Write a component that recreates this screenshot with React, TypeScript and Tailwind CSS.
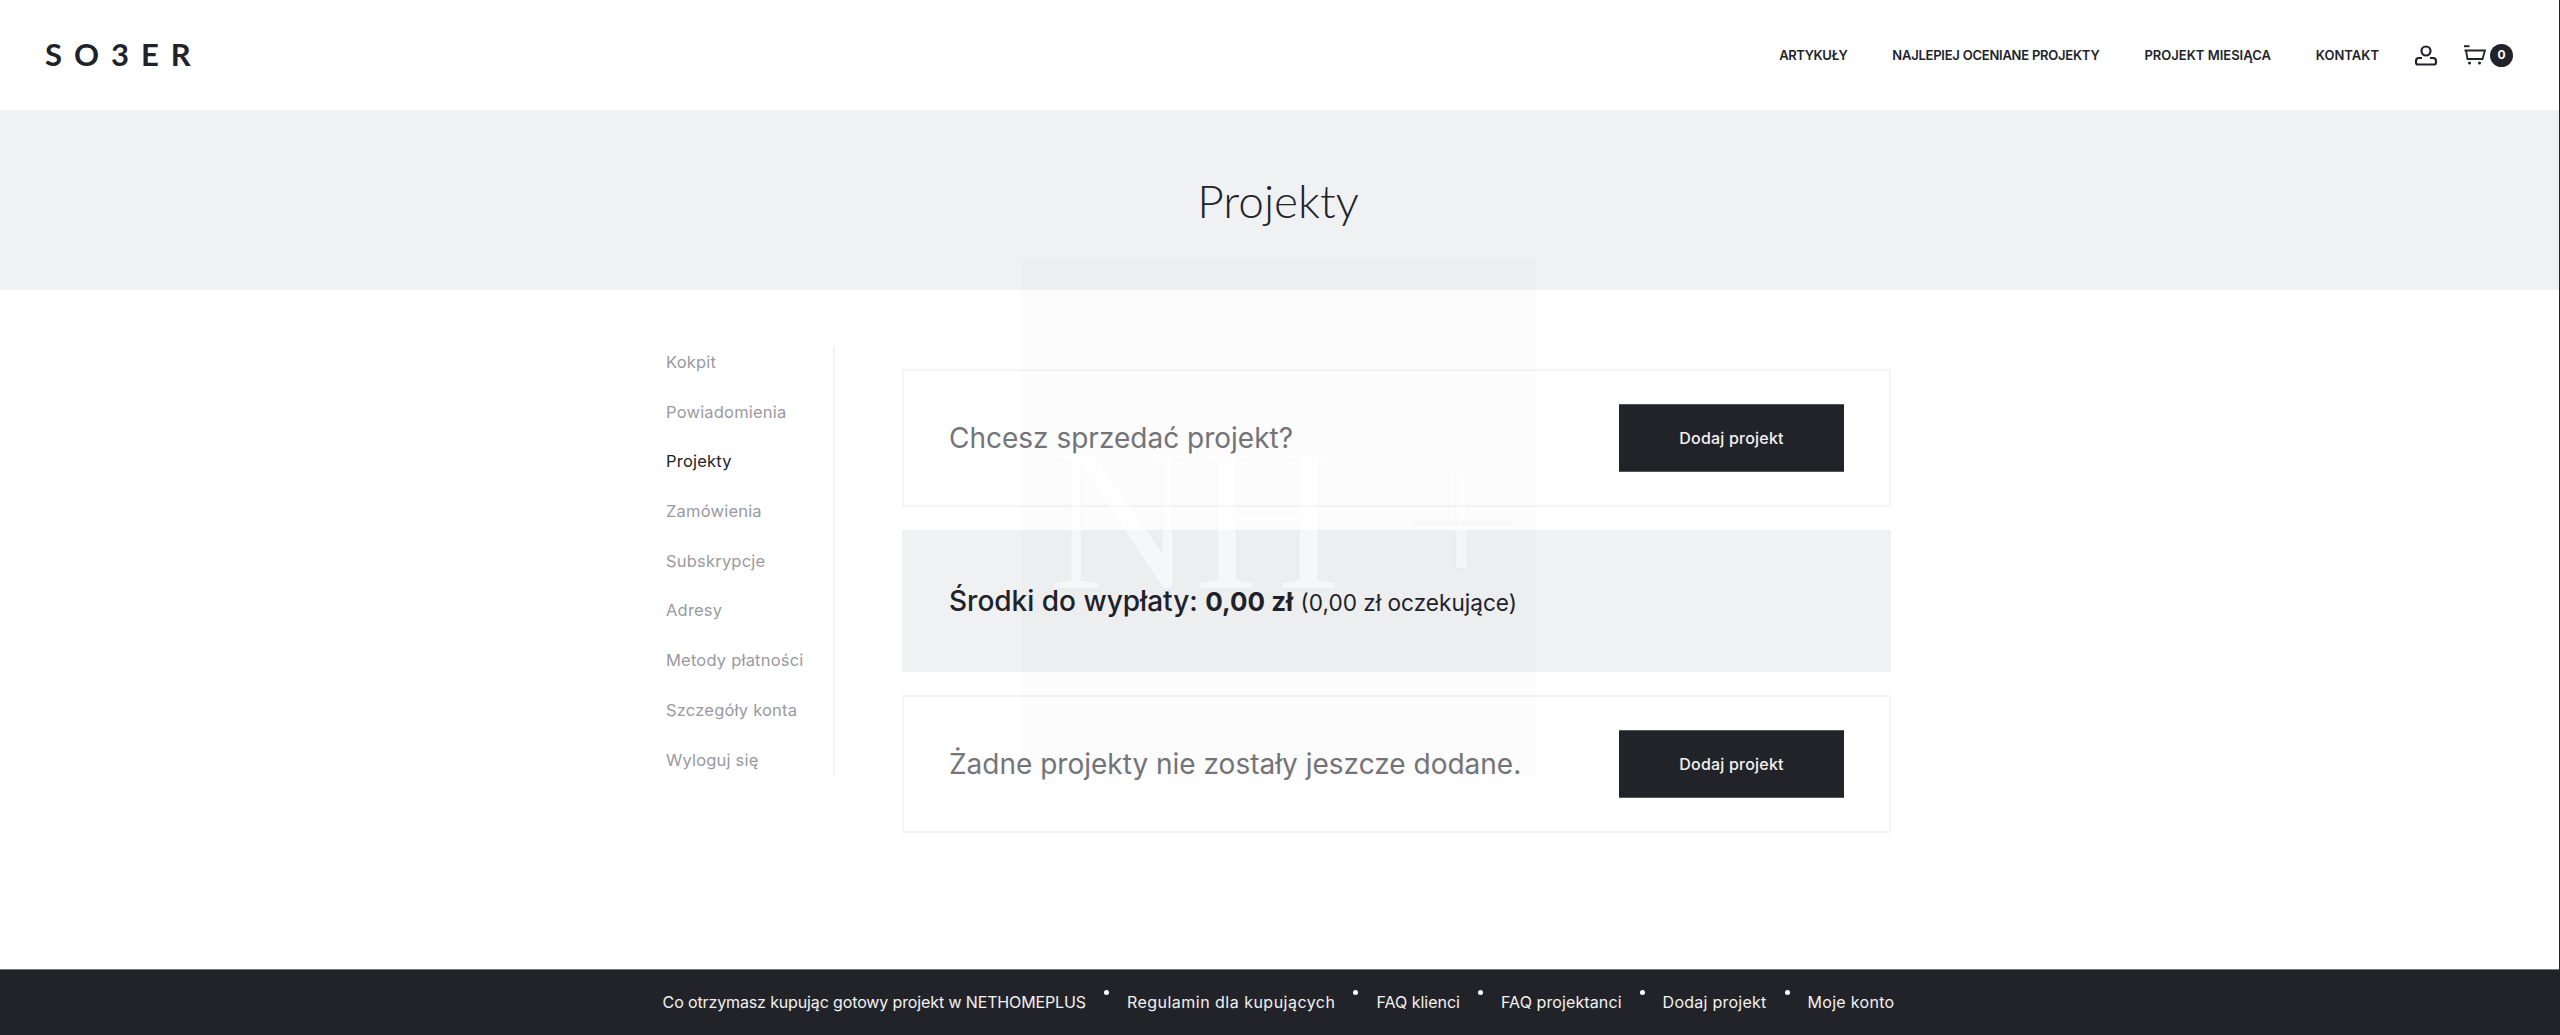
import React from "react";

const sideItems = ["Kokpit", "Powiadomienia", "Projekty", "Zamówienia", "Subskrypcje", "Adresy", "Metody płatności", "Szczegóły konta", "Wyloguj się"];
const footerItems = [
  { t: "Co otrzymasz kupując gotowy projekt w NETHOMEPLUS", c: "tracking-[-0.13px]" },
  { t: "Regulamin dla kupujących", c: "tracking-[0.48px]" },
  { t: "FAQ klienci", c: "" },
  { t: "FAQ projektanci", c: "tracking-[0.1px]" },
  { t: "Dodaj projekt", c: "tracking-[0.25px]" },
  { t: "Moje konto", c: "tracking-[0.3px]" },
];

function UserIcon() {
  return (
    <svg width="24" height="24" viewBox="0 0 24 24" fill="none" stroke="#22232a" strokeWidth="2.2">
      <circle cx="12" cy="8" r="4.5" />
      <path d="M8 15 H5 a3 3 0 0 0 -3 3 v1.5 a2 2 0 0 0 2 2 h16 a2 2 0 0 0 2 -2 V18 a3 3 0 0 0 -3 -3 h-3" />
    </svg>
  );
}

function CartIcon() {
  return (
    <svg width="24" height="24" viewBox="0 0 24 24" fill="none" stroke="#22232a" strokeWidth="1.8">
      <path d="M1 3.2 H6.5" strokeWidth="2" />
      <path d="M1.5 7.5 H22 L19.5 16 H4.5 L3 7.5" />
      <circle cx="6.5" cy="20" r="1.5" fill="#22232a" stroke="none" />
      <circle cx="16.5" cy="20" r="1.5" fill="#22232a" stroke="none" />
    </svg>
  );
}

function Watermark() {
  return (
    <svg className="absolute left-[1022px] top-[259px] pointer-events-none" width="514" height="518" viewBox="0 0 514 518">
      <rect x="0" y="0" width="514" height="518" fill="#000" fillOpacity="0.012" />
      <text x="26" y="329" fontFamily="Liberation Serif" fontSize="205" textLength="293" lengthAdjust="spacingAndGlyphs" fill="#fff" fillOpacity="0.5" stroke="#000" strokeOpacity="0.025">NH</text>
      <rect x="434" y="213" width="11" height="96" fill="#fff" fillOpacity="0.4" stroke="#000" strokeOpacity="0.02" />
      <rect x="391" y="263" width="98" height="2" fill="#fff" fillOpacity="0.6" stroke="#000" strokeOpacity="0.04" />
    </svg>
  );
}

function Button() {
  return (
    <button className="w-[225px] h-[68px] bg-[#222329] border-y border-[#55565c] text-[#f2f2f2] text-[16px] font-medium tracking-[0.2px] pb-[1px]">
      Dodaj projekt
    </button>
  );
}

export default function App() {
  return (
    <div className="relative min-h-screen flex flex-col bg-white text-[#22232a] border-r border-[#222329] overflow-hidden" style={{ fontFamily: "Inter, 'Noto Sans', sans-serif" }}>
      <header className="h-[110px] flex items-center justify-between pl-[45px] pr-[46px]">
        <div className="text-[31px] font-bold leading-none tracking-[12px] text-[#22232a] -mt-[2px]" style={{ fontFamily: "Lato, sans-serif" }}>SO3ER</div>
        <div className="flex items-center">
          <nav className="flex items-center gap-[45px] text-[13px] font-semibold leading-none">
            <span className="tracking-[-0.4px]">ARTYKUŁY</span>
            <span className="tracking-[-0.24px]">NAJLEPIEJ OCENIANE PROJEKTY</span>
            <span>PROJEKT MIESIĄCA</span>
            <span>KONTAKT</span>
          </nav>
          <div className="ml-[35px]"><UserIcon /></div>
          <div className="ml-[25px]"><CartIcon /></div>
          <div className="ml-[3px] w-[23px] h-[23px] rounded-full bg-[#22232a] text-white text-[12px] font-bold flex items-center justify-center">0</div>
        </div>
      </header>

      <section className="h-[180px] bg-[#f0f1f3] flex items-center justify-center">
        <h1 className="text-[46px] font-light leading-none mt-[2px] mr-[3px]" style={{ fontFamily: "Lato, sans-serif" }}>Projekty</h1>
      </section>

      <main className="flex-1 flex items-start pl-[666px] pt-[56px]">
        <aside className="w-[169px] border-r-2 border-[#f5f5f6] flex flex-col gap-[17.7px] text-[16.5px] tracking-[0.2px] text-[#9a9aa0]">
          {sideItems.map((s) => (
            <a key={s} className={`h-[32px] leading-[32px] ${s === "Projekty" ? "text-[#22232a]" : ""}`}>{s}</a>
          ))}
        </aside>
        <div className="w-[989px] ml-[67px] mt-[23px] flex flex-col gap-[23px]">
          <div className="h-[138px] border-2 border-[#f4f4f5] pl-[45px] pr-[45px] flex items-center justify-between">
            <span className="text-[28px] text-[#75757a]">Chcesz sprzedać projekt?</span>
            <Button />
          </div>
          <div className="h-[142px] bg-[#f0f1f3] pl-[47px] flex items-center text-[28px] font-medium">
            <span>Środki do wypłaty: <b className="font-bold text-[26px]">0,00 zł</b> <span className="text-[22.6px] font-normal">(0,00 zł oczekujące)</span></span>
          </div>
          <div className="h-[138px] border-2 border-[#f4f4f5] pl-[45px] pr-[45px] flex items-center justify-between">
            <span className="text-[28px] text-[#75757a]">Żadne projekty nie zostały jeszcze dodane.</span>
            <Button />
          </div>
        </div>
      </main>

      <footer className="h-[66px] bg-[#222329] border-t border-[#77787c] flex items-center justify-center text-[16px] text-[#f2f2f2] pb-[2px]">
        <div className="flex items-center pr-[2px]">
          {footerItems.map((s, i) => (
            <React.Fragment key={s.t}>
              {i > 0 && <i className="mx-[18px] w-[5px] h-[5px] rounded-full bg-white -mt-[18px]" />}
              <span className={s.c}>{s.t}</span>
            </React.Fragment>
          ))}
        </div>
      </footer>

      <Watermark />
    </div>
  );
}
